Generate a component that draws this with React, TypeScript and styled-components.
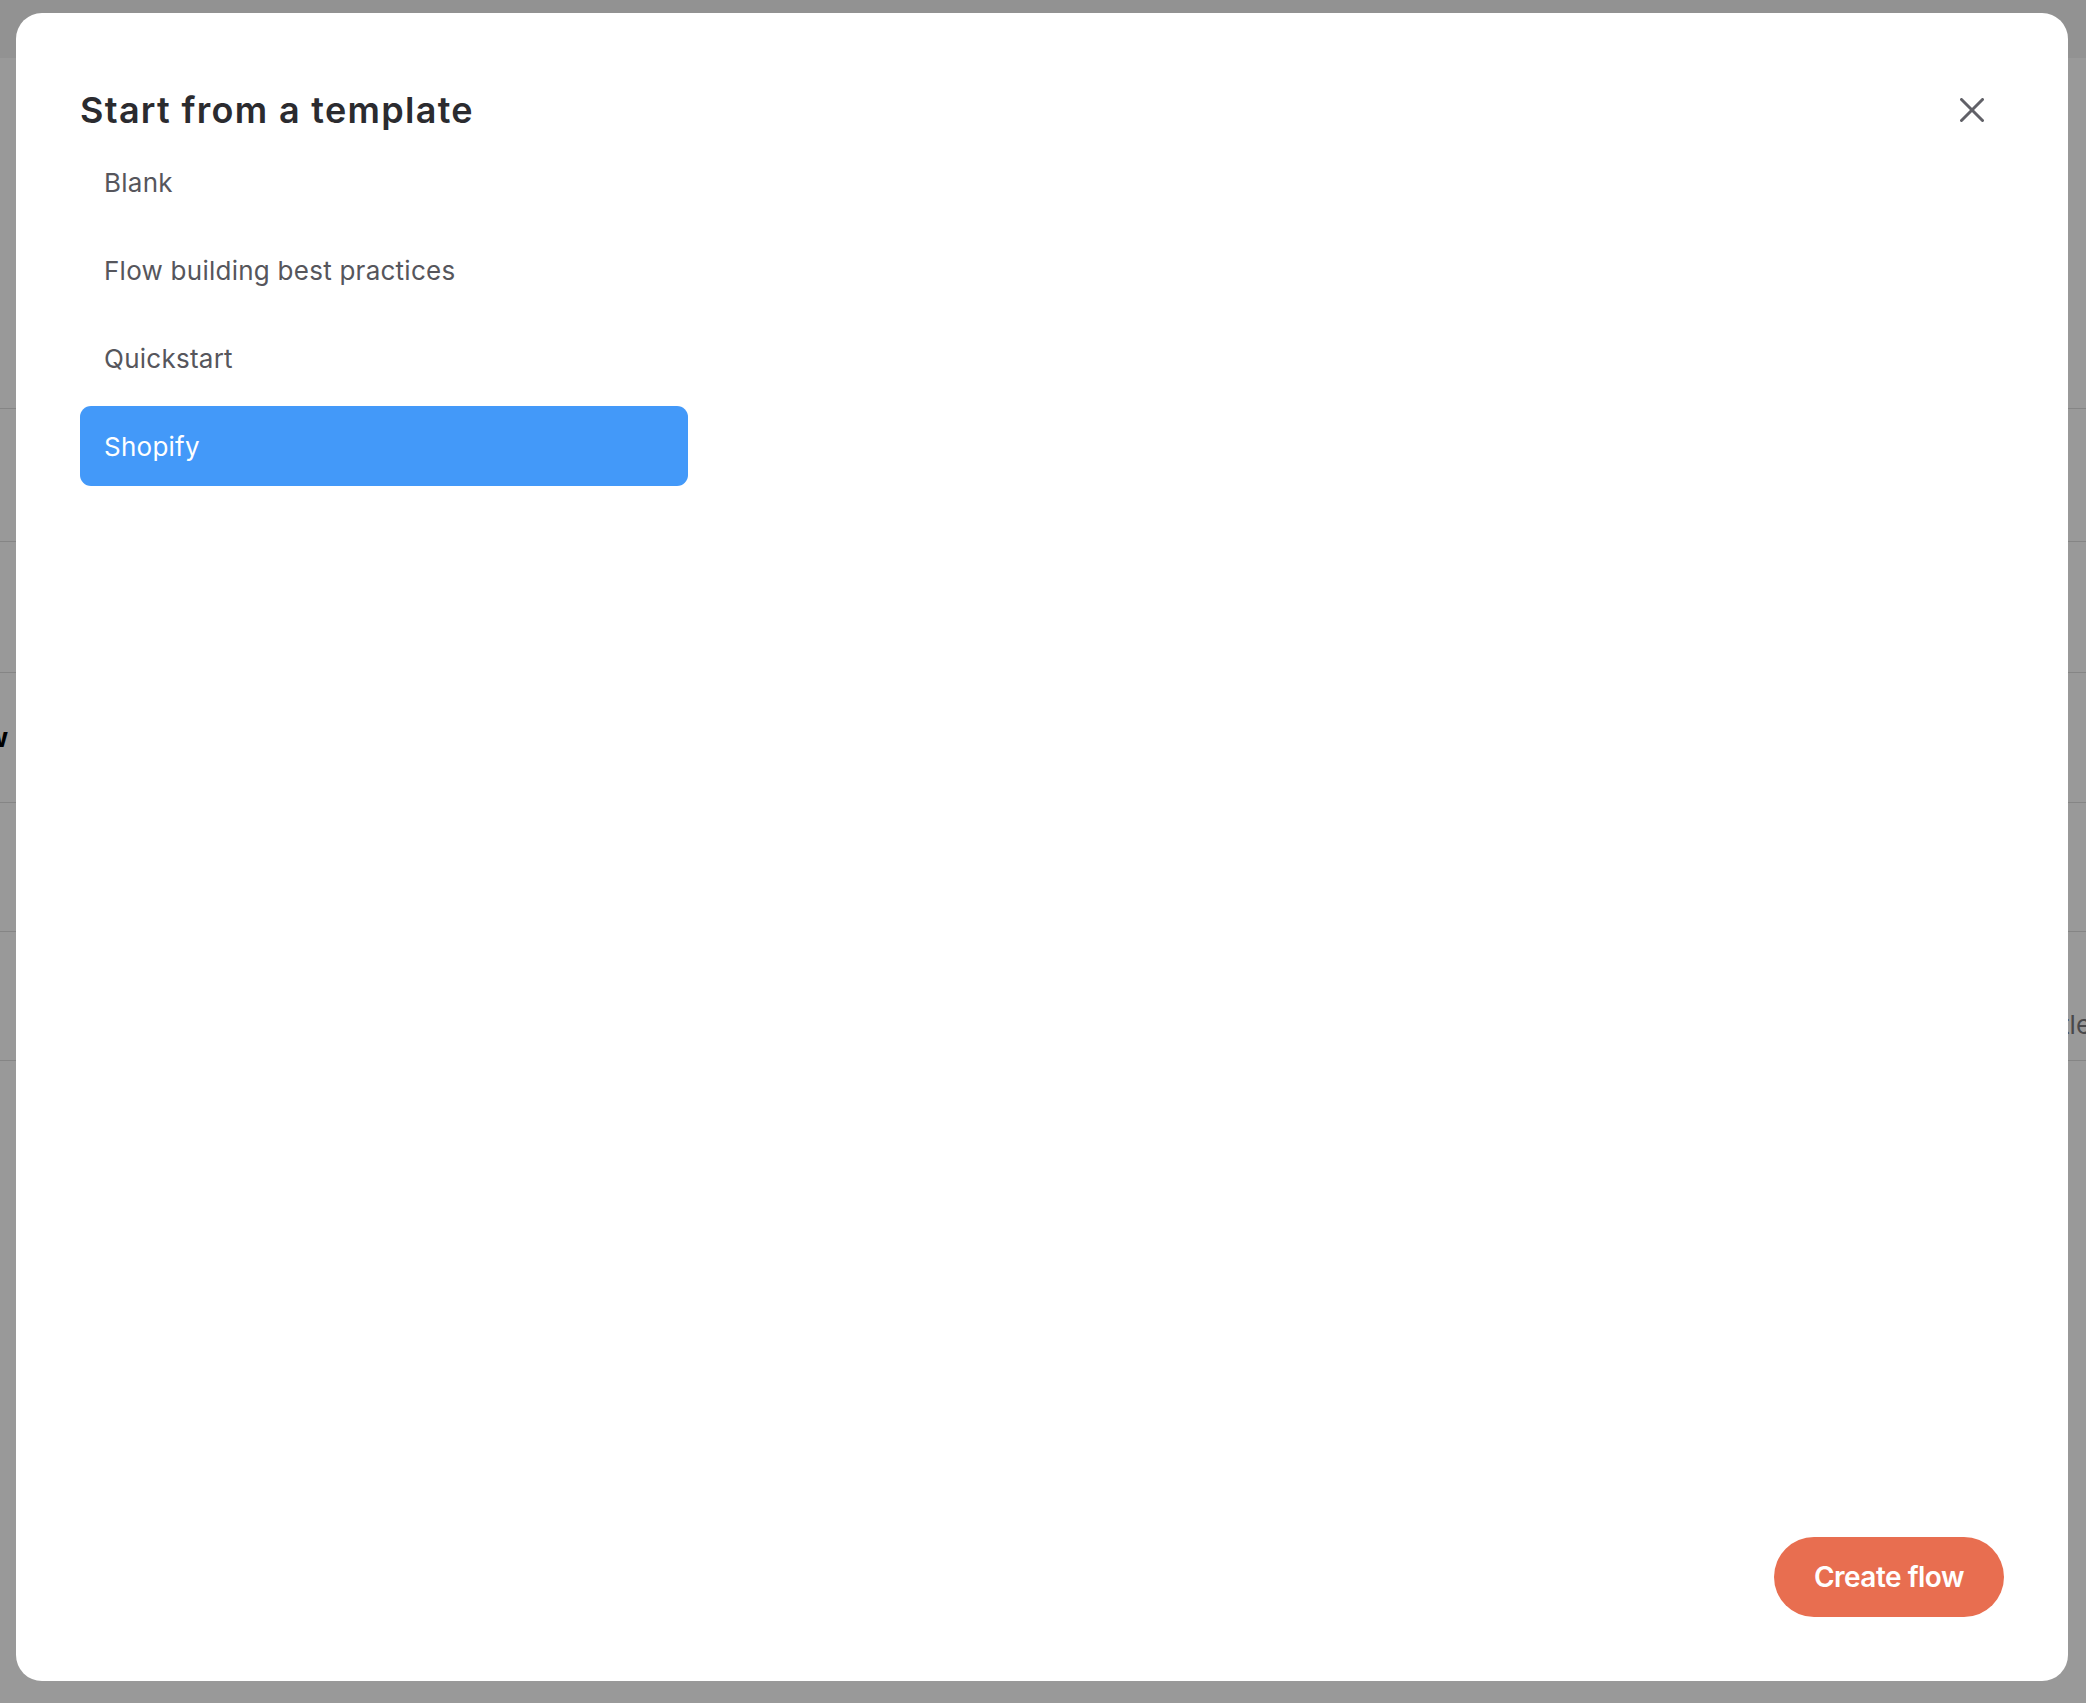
import { useState } from 'react'
import styled, { createGlobalStyle } from 'styled-components'

const GlobalStyle = createGlobalStyle`
  html, body {
    margin: 0;
    padding: 0;
    overflow: hidden;
  }
  body {
    font-family: Inter, "Noto Sans", "Liberation Sans", sans-serif;
    -webkit-font-smoothing: antialiased;
  }
  * { box-sizing: border-box; }
`

// page behind the modal, only a few bits of it show through
const AppShell = styled.div`
  width: 2086px;
  height: 1703px;
  background: #fff;
`

const TopBar = styled.div`
  height: 58px;
  background: #f4f4f4;
`

const Toolbar = styled.div`
  height: 351px;
  border-bottom: 1px solid #dedede;
`

const TableRow = styled.div<{ $height: number }>`
  display: flex;
  align-items: center;
  height: ${p => p.$height}px;
  border-bottom: 1px solid #dedede;
`

const LeadCell = styled.div`
  display: flex;
  justify-content: flex-end;
  width: 8px;
  white-space: nowrap;
  font-size: 26px;
  font-weight: 700;
  color: #000;
`

const TrailCell = styled.div`
  align-self: flex-end;
  margin-left: auto;
  width: 48px;
  padding-bottom: 20px;
  white-space: nowrap;
  font-size: 26px;
  color: #7a7a7e;
`

const Overlay = styled.div`
  position: fixed;
  inset: 0;
  display: flex;
  padding: 13px 18px 22px 16px;
  background: rgba(0, 0, 0, 0.4);
`

const Modal = styled.div`
  flex: 1;
  display: flex;
  flex-direction: column;
  padding: 75px 64px 64px 64px;
  background: #fff;
  border-radius: 26px;
`

const Header = styled.div`
  display: flex;
  align-items: center;
  justify-content: space-between;
  height: 44px;
`

const Title = styled.h2`
  margin: 0;
  font-size: 36px;
  line-height: 44px;
  font-weight: 600;
  color: #2b2b2f;
  letter-spacing: 1.3px;
`

const CloseButton = styled.button`
  display: flex;
  align-items: center;
  justify-content: center;
  width: 40px;
  height: 40px;
  margin-right: 12px;
  padding: 0;
  border: none;
  background: transparent;
  color: #616168;
  cursor: pointer;
`

const TemplateList = styled.div`
  flex: 1;
  display: flex;
  flex-direction: column;
  gap: 8px;
  width: 608px;
  margin-top: 10px;
`

const TemplateItem = styled.div<{ $active?: boolean }>`
  display: flex;
  align-items: center;
  height: 80px;
  padding: 0 24px;
  border-radius: 11px;
  font-size: 26px;
  letter-spacing: 0.25px;
  color: ${p => p.$active ? '#fff' : '#56565c'};
  background: ${p => p.$active ? '#4399f9' : 'transparent'};
  cursor: pointer;
`

const Footer = styled.div`
  display: flex;
  justify-content: flex-end;
`

const PrimaryButton = styled.button`
  height: 80px;
  padding: 0 40px;
  border: none;
  border-radius: 40px;
  background: #e86e50;
  color: #fff;
  font-family: inherit;
  font-size: 28px;
  font-weight: 600;
  letter-spacing: -0.5px;
  cursor: pointer;
`

const TEMPLATES = ['Blank', 'Flow building best practices', 'Quickstart', 'Shopify']

const ROW_HEIGHTS = [133, 131, 130, 129, 129]

function CloseIcon () {
  return (
    <svg width='24' height='24' viewBox='0 0 24 24' fill='none' stroke='currentColor' strokeWidth='3' strokeLinecap='round'>
      <line x1='1.5' y1='1.5' x2='22.5' y2='22.5' />
      <line x1='22.5' y1='1.5' x2='1.5' y2='22.5' />
    </svg>
  )
}

export default function App () {
  const [selected, setSelected] = useState('Shopify')

  return (
    <>
      <GlobalStyle />
      <AppShell>
        <TopBar />
        <Toolbar />
        {ROW_HEIGHTS.map((h, i) => (
          <TableRow key={i} $height={h}>
            {i === 2 && <LeadCell>Flow</LeadCell>}
            {i === 4 && <TrailCell>Title</TrailCell>}
          </TableRow>
        ))}
      </AppShell>
      <Overlay>
        <Modal>
          <Header>
            <Title>Start from a template</Title>
            <CloseButton aria-label='Close'><CloseIcon /></CloseButton>
          </Header>
          <TemplateList>
            {TEMPLATES.map(t => (
              <TemplateItem key={t} $active={t === selected} onClick={() => setSelected(t)}>{t}</TemplateItem>
            ))}
          </TemplateList>
          <Footer>
            <PrimaryButton>Create flow</PrimaryButton>
          </Footer>
        </Modal>
      </Overlay>
    </>
  )
}
